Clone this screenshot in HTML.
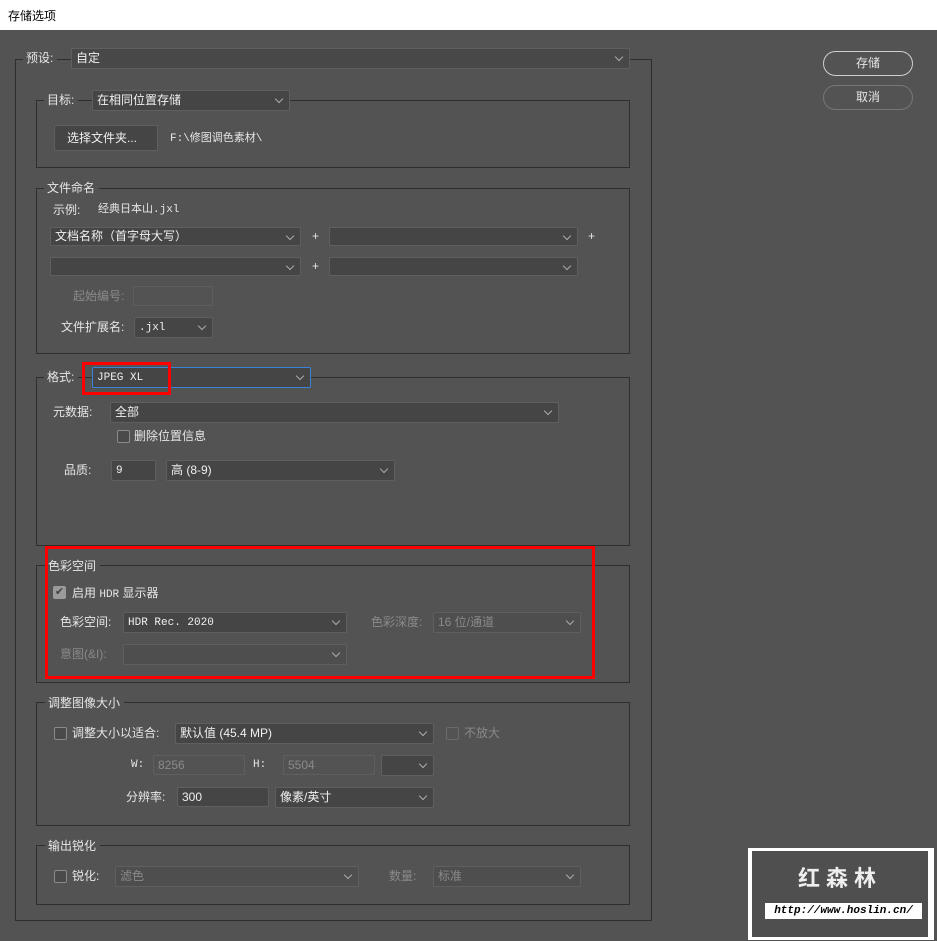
<!DOCTYPE html>
<html><head><meta charset="utf-8"><style>
*{margin:0;padding:0;box-sizing:border-box}
body{width:937px;height:941px;background:#535353;position:relative;overflow:hidden;font-family:"Liberation Sans","Noto Sans CJK SC",sans-serif;font-size:12px;color:#e6e6e6}
.a{position:absolute}
.title{left:0;top:0;width:937px;height:30px;background:#fff;color:#000;padding:7px 0 0 8px;font-size:12px}
.g{position:absolute;border:1px solid #2e2e2e}
.lb{position:absolute;background:#535353;padding:0 4px 0 3px;white-space:nowrap;line-height:14px}
.s{position:absolute;background:#454545;border:1px solid #5f5f5f;border-radius:2px;padding-left:4px;line-height:19px;white-space:nowrap;color:#f0f0f0}
.s.dd::after{content:"";position:absolute;right:7px;top:5px;width:5px;height:5px;border-right:1px solid #aaa;border-bottom:1px solid #aaa;transform:rotate(45deg)}
.dis{color:#8a8a8a}
.t{position:absolute;white-space:nowrap;line-height:14px}
.cb{position:absolute;width:13px;height:13px;border:1px solid #8a8a8a;border-radius:2px;background:#4a4a4a}
.mono{font-family:"Liberation Mono","Noto Sans CJK SC",monospace;font-size:11px}
.s.mono{line-height:20px}
.btn{position:absolute;border-radius:13px;text-align:center;line-height:22px}
</style></head><body>
<div class="a title">存储选项</div>

<div class="g" style="left:15px;top:59px;width:637px;height:862px"></div>
<div class="lb" style="left:23px;top:51px">预设:</div>
<div class="s dd" style="left:71px;top:48px;width:559px;height:21px;background:#484848">自定</div>

<div class="g" style="left:36px;top:100px;width:594px;height:68px"></div>
<div class="lb" style="left:44px;top:93px">目标:</div>
<div class="s dd" style="left:92px;top:90px;width:198px;height:21px">在相同位置存储</div>
<div class="s" style="left:54px;top:125px;width:104px;height:26px;line-height:24px;padding-left:12px">选择文件夹...</div>
<div class="t mono" style="left:170px;top:132px">F:\修图调色素材\</div>

<div class="g" style="left:36px;top:188px;width:594px;height:166px"></div>
<div class="lb" style="left:44px;top:181px">文件命名</div>
<div class="t" style="left:53px;top:203px">示例:</div>
<div class="t mono" style="left:98px;top:203px">经典日本山.jxl</div>
<div class="s dd" style="left:50px;top:227px;width:251px;height:19px;line-height:17px">文档名称（首字母大写）</div>
<div class="t" style="left:312px;top:229px">+</div>
<div class="s dd" style="left:329px;top:227px;width:249px;height:19px"></div>
<div class="t" style="left:588px;top:229px">+</div>
<div class="s dd" style="left:50px;top:257px;width:251px;height:19px"></div>
<div class="t" style="left:312px;top:259px">+</div>
<div class="s dd" style="left:329px;top:257px;width:249px;height:19px"></div>
<div class="t dis" style="left:73px;top:289px">起始编号:</div>
<div class="s" style="left:133px;top:286px;width:80px;height:20px;background:#535353;border-color:#5e5e5e"></div>
<div class="t" style="left:61px;top:320px">文件扩展名:</div>
<div class="s dd mono" style="left:134px;top:317px;width:79px;height:21px">.jxl</div>

<div class="g" style="left:36px;top:377px;width:594px;height:169px"></div>
<div class="lb" style="left:44px;top:370px">格式:</div>
<div class="s dd mono" style="left:92px;top:367px;width:219px;height:21px;border-color:#3b83d8">JPEG XL</div>
<div class="a" style="left:82px;top:362px;width:89px;height:33px;border:3px solid #f00"></div>
<div class="t" style="left:53px;top:405px">元数据:</div>
<div class="s dd" style="left:110px;top:402px;width:449px;height:21px">全部</div>
<div class="cb" style="left:117px;top:430px"></div>
<div class="t" style="left:134px;top:429px">删除位置信息</div>
<div class="t" style="left:64px;top:463px">品质:</div>
<div class="s mono" style="left:111px;top:460px;width:45px;height:21px">9</div>
<div class="s dd" style="left:166px;top:460px;width:229px;height:21px">高 (8-9)</div>

<div class="g" style="left:36px;top:565px;width:594px;height:118px"></div>
<div class="lb" style="left:45px;top:559px">色彩空间</div>
<div class="a" style="left:45px;top:546px;width:550px;height:133px;border:3px solid #f00"></div>
<div class="cb" style="left:53px;top:586px;background:#9a9a9a;border-color:#9a9a9a;color:#444;font-size:11px;line-height:11px;text-align:center">✔</div>
<div class="t" style="left:72px;top:586px">启用 <span class="mono">HDR</span> 显示器</div>
<div class="t" style="left:60px;top:615px">色彩空间:</div>
<div class="s dd mono" style="left:123px;top:612px;width:224px;height:21px">HDR Rec. 2020</div>
<div class="t dis" style="left:371px;top:615px">色彩深度:</div>
<div class="s dd dis" style="left:433px;top:612px;width:148px;height:21px;background:#4e4e4e">16 位/通道</div>
<div class="t dis" style="left:60px;top:647px">意图(&amp;I):</div>
<div class="s dd" style="left:123px;top:644px;width:224px;height:21px;background:#4e4e4e"></div>

<div class="g" style="left:36px;top:702px;width:594px;height:124px"></div>
<div class="lb" style="left:45px;top:696px">调整图像大小</div>
<div class="cb" style="left:54px;top:727px"></div>
<div class="t" style="left:72px;top:726px">调整大小以适合:</div>
<div class="s dd" style="left:175px;top:723px;width:259px;height:21px">默认值 (45.4 MP)</div>
<div class="cb dis" style="left:446px;top:727px;border-color:#6a6a6a;background:#535353"></div>
<div class="t dis" style="left:464px;top:726px">不放大</div>
<div class="t mono" style="left:131px;top:758px">W:</div>
<div class="s dis" style="left:153px;top:755px;width:92px;height:20px;background:#535353">8256</div>
<div class="t mono" style="left:253px;top:758px">H:</div>
<div class="s dis" style="left:283px;top:755px;width:92px;height:20px;background:#535353">5504</div>
<div class="s dd" style="left:381px;top:755px;width:53px;height:21px"></div>
<div class="t" style="left:126px;top:790px">分辨率:</div>
<div class="s" style="left:177px;top:787px;width:92px;height:20px">300</div>
<div class="s dd" style="left:275px;top:787px;width:159px;height:21px">像素/英寸</div>

<div class="g" style="left:36px;top:845px;width:594px;height:60px"></div>
<div class="lb" style="left:45px;top:839px">输出锐化</div>
<div class="cb" style="left:54px;top:870px"></div>
<div class="t" style="left:72px;top:869px">锐化:</div>
<div class="s dd dis" style="left:115px;top:866px;width:244px;height:21px;background:#4e4e4e">滤色</div>
<div class="t dis" style="left:389px;top:869px">数量:</div>
<div class="s dd dis" style="left:433px;top:866px;width:148px;height:21px;background:#4e4e4e">标准</div>

<div class="btn" style="left:823px;top:51px;width:90px;height:25px;border:1px solid #cfcfcf">存储</div>
<div class="btn" style="left:823px;top:85px;width:90px;height:25px;border:1px solid #777">取消</div>

<div class="a" style="left:748px;top:848px;width:186px;height:92px;background:#fff"></div>
<div class="a" style="left:752px;top:851px;width:176px;height:86px;background:#4f4f4f"></div>
<div class="t" style="left:752px;top:866px;width:176px;text-align:center;font-size:22px;line-height:26px;font-weight:bold;color:#eee;letter-spacing:6px">红森林</div>
<div class="a" style="left:765px;top:903px;width:157px;height:16px;background:#fff;color:#000;font-style:italic;font-weight:bold;font-size:11px;line-height:16px;text-align:center;font-family:'Liberation Mono',monospace">http://www.hoslin.cn/</div>
</body></html>
